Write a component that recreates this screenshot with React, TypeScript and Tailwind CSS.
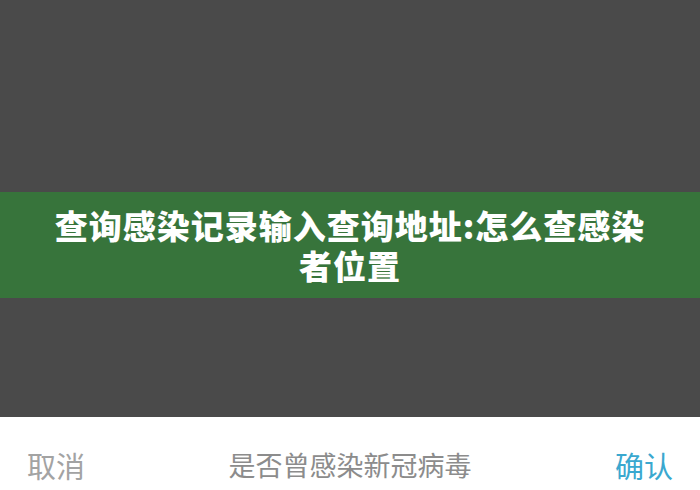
export default function App() {
  return (
    <div className="flex h-[490px] w-[700px] flex-col overflow-hidden bg-[#4a4a4a] font-['Noto_Sans_CJK_SC',sans-serif]">
      <div className="h-[192px]" />
      <div className="flex h-[106px] items-center justify-center bg-[#37743b] px-[40px]">
        <h1 className="text-center text-[33px] leading-[40px] font-black tracking-[1px] text-white">
          查询感染记录输入查询地址:怎么查感染者位置
        </h1>
      </div>
      <div className="flex-1" />
      <div className="flex h-[73px] items-start justify-between bg-white px-[27px] pt-[30px] text-[29px] leading-[36px]">
        <button className="text-[#a3a3a3]">取消</button>
        <span className="text-[27px] text-[#8c8c8c]">是否曾感染新冠病毒</span>
        <button className="text-[#3aa8cf]">确认</button>
      </div>
    </div>
  );
}
